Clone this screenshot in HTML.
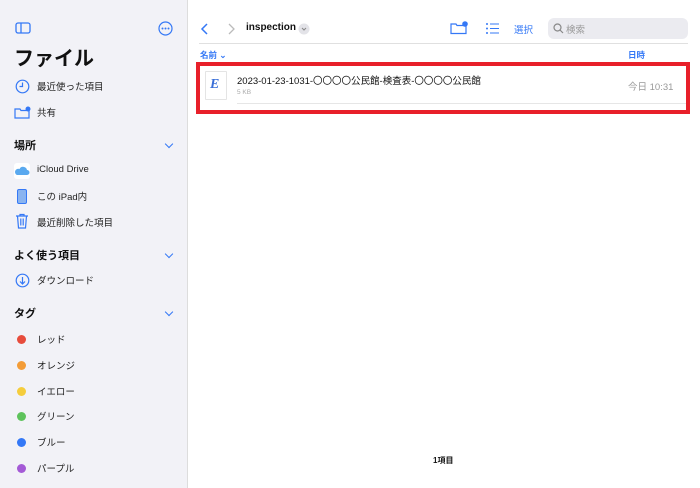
<!DOCTYPE html><html><head><meta charset="utf-8"><style>
*{margin:0;padding:0;box-sizing:border-box}
body{width:700px;height:488px;overflow:hidden;background:#fff;font-family:"Liberation Sans","Noto Sans CJK JP",sans-serif;position:relative}
.sb{position:absolute;left:0;top:0;width:188px;height:488px;background:#f2f2f7;border-right:1px solid #ddd}
.a{position:absolute;white-space:nowrap}
.it{font-size:9.5px;color:#222;left:37px}
.h{font-size:11px;font-weight:bold;left:14px;color:#111}
.chev{position:absolute;left:166px;width:6px;height:6px;border-right:1.3px solid #3478f6;border-bottom:1.3px solid #3478f6;transform:rotate(45deg)}
.dot{position:absolute;left:17px;width:9px;height:9px;border-radius:50%}
</style></head><body>
<div class="sb">
<svg class="a" style="left:15px;top:22px" width="16" height="12"><rect x="1" y="1" width="14" height="10" rx="2" fill="none" stroke="#3478f6" stroke-width="1.3"/><line x1="6" y1="1" x2="6" y2="11" stroke="#3478f6" stroke-width="1.3"/></svg>
<svg class="a" style="left:158px;top:21px" width="15" height="15"><circle cx="7.5" cy="7.5" r="6.5" fill="none" stroke="#3478f6" stroke-width="1.2"/><circle cx="4.5" cy="7.5" r="1" fill="#3478f6"/><circle cx="7.5" cy="7.5" r="1" fill="#3478f6"/><circle cx="10.5" cy="7.5" r="1" fill="#3478f6"/></svg>
<div class="a" style="left:14px;top:42px;font-size:20px;font-weight:bold;color:#111">ファイル</div>
<svg class="a" style="left:15px;top:79px" width="15" height="15"><circle cx="7.5" cy="7.5" r="6.3" fill="none" stroke="#3478f6" stroke-width="1.2"/><path d="M7.5 3.5V7.5H4.5" fill="none" stroke="#3478f6" stroke-width="1.2"/></svg>
<div class="a it" style="top:79px">最近使った項目</div>
<svg class="a" style="left:14px;top:106px" width="17" height="13"><path d="M1 3h5l1 1.5h8v7.5H1z" fill="none" stroke="#3478f6" stroke-width="1.2"/><circle cx="14" cy="3" r="2.5" fill="#3478f6"/></svg>
<div class="a it" style="top:105px">共有</div>
<div class="a h" style="top:137px">場所</div><div class="chev" style="top:141px"></div>
<div class="a" style="left:14px;top:163px;width:16px;height:16px;background:#fff;border-radius:3px"><svg width="16" height="16"><path d="M3 12h10a2.5 2.5 0 0 0 0-5a4 4 0 0 0-7.5-1a3 3 0 0 0-2.5 6z" fill="#5aa9ef"/></svg></div>
<div class="a it" style="top:164px">iCloud Drive</div>
<div class="a" style="left:17px;top:189px;width:10px;height:15px;border-radius:2px;background:#8ab4f0;border:1.2px solid #3478f6"></div>
<div class="a it" style="top:189px">この iPad内</div>
<svg class="a" style="left:15px;top:213px" width="14" height="16"><path d="M1 3h12M5 3V1.5h4V3M2.5 3l1 12h7l1-12" fill="none" stroke="#3478f6" stroke-width="1.2"/><path d="M5.5 5.5v7M7 5.5v7M8.5 5.5v7" stroke="#3478f6" stroke-width=".8"/></svg>
<div class="a it" style="top:215px">最近削除した項目</div>
<div class="a h" style="top:247px">よく使う項目</div><div class="chev" style="top:251px"></div>
<svg class="a" style="left:15px;top:273px" width="15" height="15"><circle cx="7.5" cy="7.5" r="6.3" fill="none" stroke="#3478f6" stroke-width="1.2"/><path d="M7.5 4v7M5 8.5l2.5 2.5 2.5-2.5" fill="none" stroke="#3478f6" stroke-width="1.2"/></svg>
<div class="a it" style="top:273px">ダウンロード</div>
<div class="a h" style="top:305px">タグ</div><div class="chev" style="top:309px"></div>
<div class="dot" style="top:335px;background:#e74c3c"></div><div class="a it" style="top:332px">レッド</div>
<div class="dot" style="top:361px;background:#f39c37"></div><div class="a it" style="top:358px">オレンジ</div>
<div class="dot" style="top:387px;background:#f5cd3c"></div><div class="a it" style="top:384px">イエロー</div>
<div class="dot" style="top:412px;background:#5ec35c"></div><div class="a it" style="top:409px">グリーン</div>
<div class="dot" style="top:438px;background:#3478f6"></div><div class="a it" style="top:435px">ブルー</div>
<div class="dot" style="top:464px;background:#a45ad6"></div><div class="a it" style="top:461px">パープル</div>
</div>
<svg class="a" style="left:200px;top:22px" width="10" height="14"><path d="M7 2L2 7l5 5" fill="none" stroke="#3478f6" stroke-width="1.5"/></svg>
<svg class="a" style="left:226px;top:22px" width="10" height="14"><path d="M3 2l5 5-5 5" fill="none" stroke="#bbb" stroke-width="1.3"/></svg>
<div class="a" style="left:246px;top:22px;font-size:10px;font-weight:bold;color:#111">inspection</div>
<svg class="a" style="left:298px;top:23px" width="12" height="12"><circle cx="6" cy="6" r="5.5" fill="#e3e3e8"/><path d="M4 5l2 2 2-2" fill="none" stroke="#888" stroke-width="1"/></svg>
<svg class="a" style="left:450px;top:21px" width="18" height="14"><path d="M1 3h5l1 1.5h9v8H1z" fill="none" stroke="#3478f6" stroke-width="1.2"/><circle cx="15" cy="3" r="2.8" fill="#3478f6"/></svg>
<svg class="a" style="left:486px;top:23px" width="14" height="11"><g fill="#3478f6"><circle cx="1" cy="1" r="1"/><circle cx="1" cy="5.5" r="1"/><circle cx="1" cy="10" r="1"/><rect x="4" y=".5" width="9" height="1"/><rect x="4" y="5" width="9" height="1"/><rect x="4" y="9.5" width="9" height="1"/></g></svg>
<div class="a" style="left:514px;top:22px;font-size:9.5px;color:#3478f6">選択</div>
<div class="a" style="left:548px;top:18px;width:140px;height:21px;border-radius:6px;background:#ebebf0"></div>
<svg class="a" style="left:553px;top:23px" width="11" height="11"><circle cx="4.5" cy="4.5" r="3.5" fill="none" stroke="#888" stroke-width="1.2"/><path d="M7 7l3 3" stroke="#888" stroke-width="1.2"/></svg>
<div class="a" style="left:566px;top:22px;font-size:9.5px;color:#999">検索</div>
<div class="a" style="left:199px;top:43px;width:489px;height:1px;background:#e0e0e0"></div>
<div class="a" style="left:200px;top:49px;font-size:8.5px;font-weight:bold;color:#3478f6">名前 ⌄</div>
<div class="a" style="left:628px;top:49px;font-size:8.5px;font-weight:bold;color:#3478f6">日時</div>
<div class="a" style="left:196px;top:62px;width:494px;height:52px;border:4px solid #e8202a"></div>
<div class="a" style="left:205px;top:71px;width:22px;height:29px;background:#fff;border:1px solid #e4e4e4;border-radius:1px"></div>
<div class="a" style="left:210px;top:77px;font-size:14px;font-family:'Liberation Serif',serif;font-style:italic;font-weight:bold;color:#3a6fd8">E</div>
<div class="a" style="left:237px;top:73px;font-size:9.5px;color:#111">2023-01-23-1031-〇〇〇〇公民館-検査表-〇〇〇〇公民館</div>
<div class="a" style="left:237px;top:89px;font-size:6.5px;color:#aaa">5 KB</div>
<div class="a" style="left:628px;top:79px;font-size:9.5px;color:#999">今日 10:31</div>
<div class="a" style="left:237px;top:103px;width:449px;height:1px;background:#e6e6e6"></div>
<div class="a" style="left:433px;top:455px;font-size:8px;font-weight:bold;color:#111">1項目</div>
</body></html>
